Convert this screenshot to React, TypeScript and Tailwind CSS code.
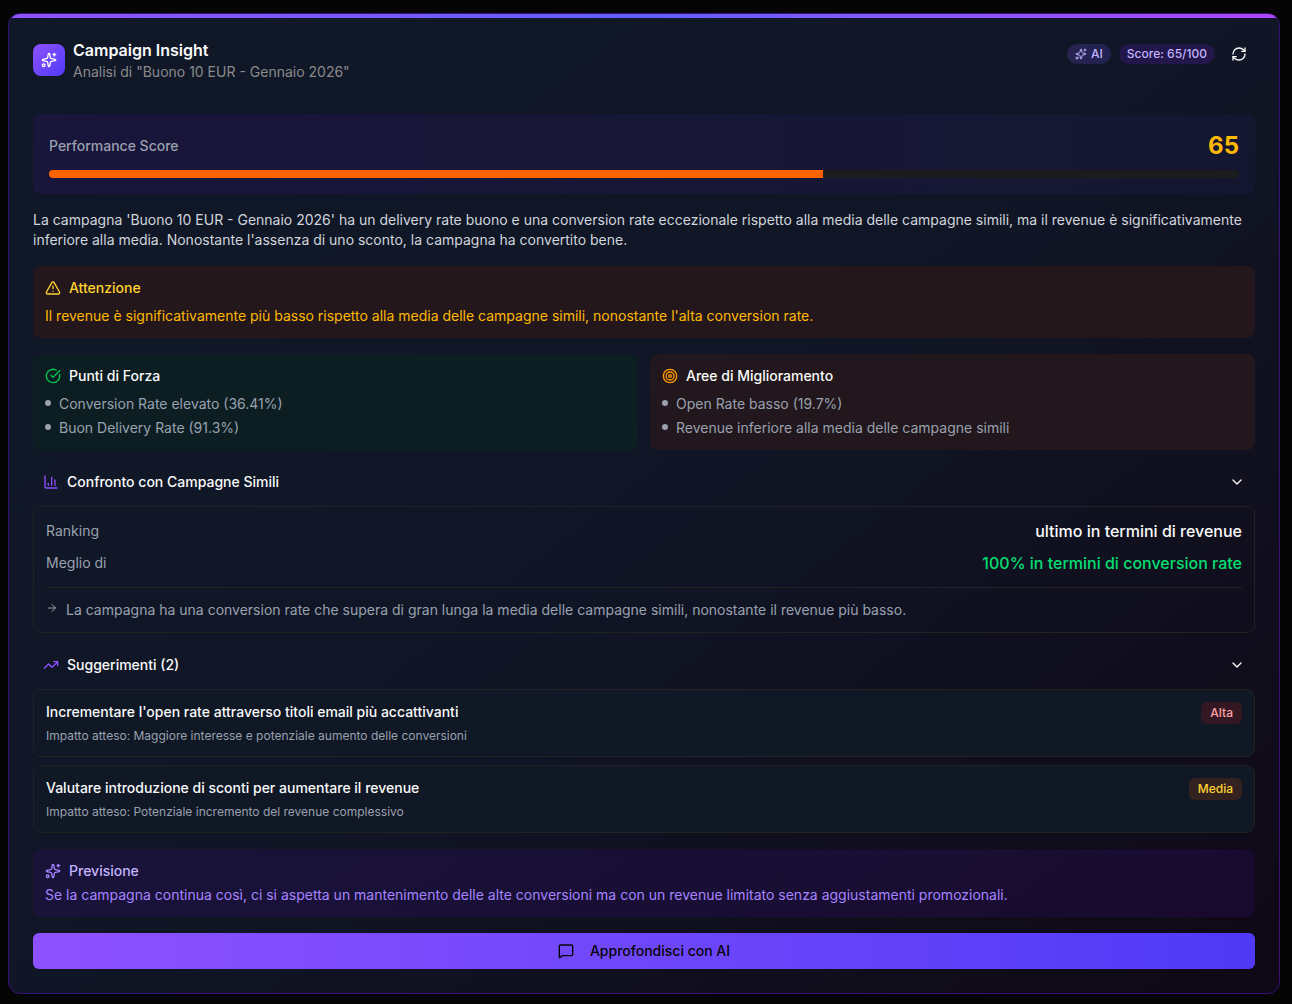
import {
  ArrowRight,
  ChartColumn,
  ChevronDown,
  CircleCheckBig,
  MessageSquare,
  RefreshCw,
  Sparkles,
  Target,
  TrendingUp,
  TriangleAlert,
} from 'lucide-react';
import type { LucideIcon } from 'lucide-react';
import { useState } from 'react';
import type { ReactNode } from 'react';

const score = 65;

const strengths = ['Conversion Rate elevato (36.41%)', 'Buon Delivery Rate (91.3%)'];

const improvements = ['Open Rate basso (19.7%)', 'Revenue inferiore alla media delle campagne simili'];

const suggestions = [
  {
    title: "Incrementare l'open rate attraverso titoli email più accattivanti",
    impact: 'Maggiore interesse e potenziale aumento delle conversioni',
    priority: 'Alta',
    badge: 'bg-[#331824] text-[#ffa2a2]',
  },
  {
    title: 'Valutare introduzione di sconti per aumentare il revenue',
    impact: 'Potenziale incremento del revenue complessivo',
    priority: 'Media',
    badge: 'bg-[#332220] text-[#ffd230]',
  },
];

function BulletList({ items }: { items: string[] }) {
  return (
    <ul className="space-y-1">
      {items.map((item) => (
        <li key={item} className="flex items-start gap-2 text-[#99a1af]">
          <span className="mt-1.5 h-1.5 w-1.5 shrink-0 rounded-full bg-[#99a1af]" />
          {item}
        </li>
      ))}
    </ul>
  );
}

function Section({ icon: Icon, title, children }: { icon: LucideIcon; title: string; children: ReactNode }) {
  const [open, setOpen] = useState(true);

  return (
    <section className="space-y-2">
      <button
        type="button"
        aria-expanded={open}
        onClick={() => setOpen(!open)}
        className="flex h-8 w-full items-center justify-between px-2.5 font-medium text-[#fafafa]"
      >
        <span className="flex items-center gap-2">
          <Icon className="h-4 w-4 text-[#8e51ff]" />
          {title}
        </span>
        <ChevronDown className="h-4 w-4" />
      </button>
      {open && children}
    </section>
  );
}

export default function App() {
  return (
    <main className="min-h-screen bg-[#050505] pt-[13px] pr-3 pb-2.5 pl-2 font-['Inter',sans-serif] text-sm text-[#fafafa]">
      <div className="relative overflow-hidden rounded-xl border border-[#371078] bg-linear-to-br from-[#101828] via-[#101626] to-[#0f0816]">
        <div className="absolute inset-x-0 top-0 h-1 bg-linear-to-r from-[#8e51ff] via-[#615fff] to-[#ad46ff]" />

        <header className="flex items-start justify-between px-6 pt-6 pb-2">
          <div className="flex items-center gap-2">
            <div className="flex h-8 w-8 items-center justify-center rounded-lg bg-linear-to-br from-[#8e51ff] to-[#4f39f6]">
              <Sparkles className="h-4 w-4 text-white" />
            </div>
            <div>
              <h1 className="text-base font-semibold">Campaign Insight</h1>
              <p className="text-[#8a8a8a]">Analisi di "Buono 10 EUR - Gennaio 2026"</p>
            </div>
          </div>
          <div className="flex items-center gap-2 text-xs font-medium">
            <span className="flex items-center gap-1 rounded-full bg-linear-to-r from-[#292350] to-[#1f2252] px-2 py-0.5 text-[#c4b4ff]">
              <Sparkles className="h-3 w-3" />
              AI
            </span>
            <span className="rounded-full bg-[#22164a] px-2 py-0.5 text-[#c4b4ff]">Score: {score}/100</span>
            <button type="button" aria-label="Aggiorna" className="flex h-8 w-8 items-center justify-center">
              <RefreshCw className="h-4 w-4" />
            </button>
          </div>
        </header>

        <div className="space-y-4 p-6">
          <div className="rounded-lg bg-linear-to-r from-violet-950/30 to-indigo-950/30 p-4">
            <div className="mb-2 flex items-center justify-between">
              <span className="font-medium text-[#99a1af]">Performance Score</span>
              <span className="text-2xl font-bold text-[#ffb900]">{score}</span>
            </div>
            <div className="h-2 overflow-hidden rounded-full bg-[#1c1c1c]">
              <div className="h-full bg-[#ff6300]" style={{ width: `${score}%` }} />
            </div>
          </div>

          <p className="text-[#d1d5dc]">
            La campagna 'Buono 10 EUR - Gennaio 2026' ha un delivery rate buono e una conversion rate eccezionale
            rispetto alla media delle campagne simili, ma il revenue è significativamente inferiore alla media.
            Nonostante l'assenza di uno sconto, la campagna ha convertito bene.
          </p>

          <div className="rounded-lg bg-[#23171c] p-3">
            <h2 className="mb-2 flex items-center gap-2 font-medium text-[#ffd230]">
              <TriangleAlert className="h-4 w-4" />
              Attenzione
            </h2>
            <p className="text-[#ffb900]">
              Il revenue è significativamente più basso rispetto alla media delle campagne simili, nonostante l'alta
              conversion rate.
            </p>
          </div>

          <div className="grid grid-cols-2 gap-3">
            <div className="rounded-lg bg-[#0d1e23] p-3">
              <h2 className="mb-2 flex items-center gap-2 font-medium">
                <CircleCheckBig className="h-4 w-4 text-[#00c950]" />
                Punti di Forza
              </h2>
              <BulletList items={strengths} />
            </div>
            <div className="rounded-lg bg-[#22171c] p-3">
              <h2 className="mb-2 flex items-center gap-2 font-medium">
                <Target className="h-4 w-4 text-[#fe9a00]" />
                Aree di Miglioramento
              </h2>
              <BulletList items={improvements} />
            </div>
          </div>

          <Section icon={ChartColumn} title="Confronto con Campagne Simili">
            <div className="rounded-lg border border-[#222222] p-3">
              <dl className="space-y-2">
                <div className="flex items-center justify-between">
                  <dt className="text-[#99a1af]">Ranking</dt>
                  <dd className="text-base font-medium">ultimo in termini di revenue</dd>
                </div>
                <div className="flex items-center justify-between">
                  <dt className="text-[#99a1af]">Meglio di</dt>
                  <dd className="text-base font-medium text-[#05df72]">100% in termini di conversion rate</dd>
                </div>
              </dl>
              <p className="mt-3 flex items-start gap-2 border-t border-[#222222] pt-3 text-[#99a1af]">
                <ArrowRight className="mt-0.5 h-3 w-3 shrink-0" />
                La campagna ha una conversion rate che supera di gran lunga la media delle campagne simili, nonostante
                il revenue più basso.
              </p>
            </div>
          </Section>

          <Section icon={TrendingUp} title={`Suggerimenti (${suggestions.length})`}>
            {suggestions.map((s) => (
              <div
                key={s.title}
                className="flex items-start justify-between gap-2 rounded-lg border border-[#222222] bg-[#101826] p-3"
              >
                <div>
                  <h3 className="mb-1.5 font-medium">{s.title}</h3>
                  <p className="text-xs text-[#99a1af]">Impatto atteso: {s.impact}</p>
                </div>
                <span className={`rounded-md border border-transparent px-2 py-0.5 text-xs font-medium ${s.badge}`}>
                  {s.priority}
                </span>
              </div>
            ))}
          </Section>

          <div className="rounded-lg bg-violet-950/30 p-3">
            <h2 className="mb-1 flex items-center gap-2 font-medium text-[#c4b4ff]">
              <Sparkles className="h-4 w-4 text-[#a684ff]" />
              Previsione
            </h2>
            <p className="text-[#a684ff]">
              Se la campagna continua così, ci si aspetta un mantenimento delle alte conversioni ma con un revenue
              limitato senza aggiustamenti promozionali.
            </p>
          </div>

          <button
            type="button"
            className="flex h-9 w-full items-center justify-center gap-4 rounded-md bg-linear-to-r from-[#8e51ff] to-[#4f39f6] font-medium text-[#050505]"
          >
            <MessageSquare className="h-4 w-4" />
            Approfondisci con AI
          </button>
        </div>
      </div>
    </main>
  );
}
